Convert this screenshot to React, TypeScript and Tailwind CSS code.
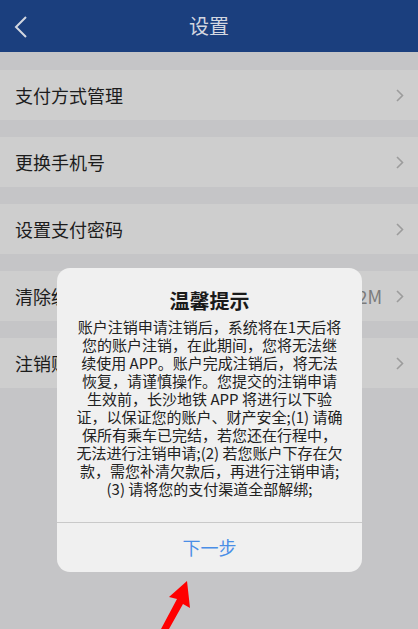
const rows = [
  { title: '支付方式管理' },
  { title: '更换手机号' },
  { title: '设置支付密码' },
  { title: '清除缓存', value: '0.52M' },
  { title: '注销账户' },
]

const lines = [
  '账户注销申请注销后，系统将在1天后将',
  '您的账户注销，在此期间，您将无法继',
  '续使用 APP。账户完成注销后，将无法',
  '恢复，请谨慎操作。您提交的注销申请',
  '生效前，长沙地铁 APP 将进行以下验',
  '证，以保证您的账户、财产安全;(1) 请确',
  '保所有乘车已完结，若您还在行程中，',
  '无法进行注销申请;(2) 若您账户下存在欠',
  '款，需您补清欠款后，再进行注销申请;',
  '(3) 请将您的支付渠道全部解绑;',
]

function Chevron() {
  return (
    <svg width="8" height="13" viewBox="0 0 8 13" className="shrink-0">
      <path d="M1 1l5.5 5.5L1 12" fill="none" stroke="#9c9c9c" strokeWidth="1.6" />
    </svg>
  )
}

export default function App() {
  return (
    <div
      className="relative h-[629px] w-full overflow-hidden bg-[#c5c5c7]"
      style={{ fontFamily: '"Noto Sans CJK SC", "Noto Sans", sans-serif' }}
    >
      <header className="relative flex h-[52px] items-center justify-center bg-[#1b3f7e]">
        <svg width="14" height="22" viewBox="0 0 14 22" className="absolute left-[14px] top-[16px]">
          <path d="M12 1L2 11l10 10" fill="none" stroke="#d3d7e0" strokeWidth="2" />
        </svg>
        <h1 className="text-[20px] leading-none text-[#d3d7e0]">设置</h1>
      </header>

      <div className="flex flex-col gap-[17px] pt-[18px]">
        {rows.map((r) => (
          <div key={r.title} className="flex h-[50px] items-center bg-[#cecece] pl-[15px] pr-[14px]">
            <span className="flex-1 text-[18px] text-[#1c1c1c]">{r.title}</span>
            {r.value && <span className="mr-[14px] text-[18px] text-[#7b7b7b]">{r.value}</span>}
            <Chevron />
          </div>
        ))}
      </div>

      <div className="absolute left-[57px] top-[268px] w-[305px] overflow-hidden rounded-[13px] bg-[#f0f0f0]">
        <div className="px-2 pb-[24px] pt-[20px] text-center">
          <h2 className="text-[20px] font-bold leading-[26px] text-[#1a1a1a]">温馨提示</h2>
          <div className="mt-[4px] text-[15px] leading-[18px] text-[#222]">
            {lines.map((l) => (
              <div key={l} className="whitespace-nowrap">
                {l}
              </div>
            ))}
          </div>
        </div>
        <div className="flex h-[50px] items-center justify-center border-t border-[#c9c9c9] text-[18px] text-[#4a8ee6]">
          下一步
        </div>
      </div>

      <svg width="60" height="60" viewBox="0 0 60 60" className="absolute left-[150px] top-[575px]">
        <path d="M37 6 L40 33 L33 29 L19 54 L11 54 L27 24 L19 22 Z" fill="#ff0000" />
      </svg>
    </div>
  )
}
